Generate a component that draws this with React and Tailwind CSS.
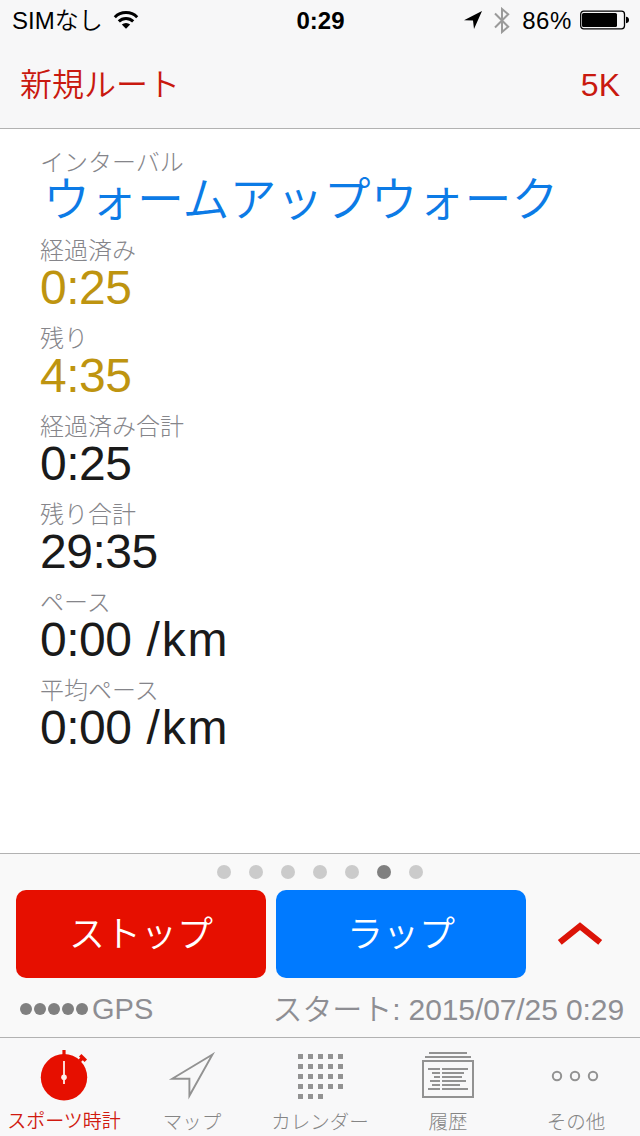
const stats = [
  { label: 'インターバル', value: 'ウォームアップウォーク', color: 'text-[#0c7be6]', text: true },
  { label: '経過済み', value: '0:25', color: 'text-[#be9410]' },
  { label: '残り', value: '4:35', color: 'text-[#be9410]' },
  { label: '経過済み合計', value: '0:25', color: 'text-[#1a1a1a]' },
  { label: '残り合計', value: '29:35', color: 'text-[#1a1a1a]' },
  { label: 'ペース', value: '0:00', unit: '/km', color: 'text-[#1a1a1a]' },
  { label: '平均ペース', value: '0:00', unit: '/km', color: 'text-[#1a1a1a]' },
];

const tabs = [
  { label: 'スポーツ時計', Icon: StopwatchIcon, active: true },
  { label: 'マップ', Icon: MapIcon },
  { label: 'カレンダー', Icon: CalendarIcon },
  { label: '履歴', Icon: HistoryIcon },
  { label: 'その他', Icon: MoreIcon },
];

function WifiIcon() {
  return (
    <svg width="26" height="20" viewBox="0 0 26 20" fill="none" stroke="#000" strokeWidth="3">
      <path d="M1.8 7.2a15.8 15.8 0 0 1 22.4 0" />
      <path d="M5.8 11.4a10.2 10.2 0 0 1 14.4 0" />
      <path d="M13 18.8 8.8 14.6a6 6 0 0 1 8.4 0z" fill="#000" stroke="none" />
    </svg>
  );
}

function StopwatchIcon() {
  return (
    <svg width="56" height="56" viewBox="0 0 56 56">
      <circle cx="28" cy="31.3" r="23.2" fill="#e60f00" />
      <path d="M26.4 4h3.2v5h-3.2z" fill="#e60f00" />
      <path d="m43.5 15 3.5-3.5" stroke="#e60f00" strokeWidth="3.5" />
      <path d="m44.2 9.2 5.6 5.6" stroke="#e60f00" strokeWidth="3.5" />
      <path d="M28 15v23" stroke="#ffeeea" strokeWidth="1.8" />
      <circle cx="28" cy="31.3" r="2.8" fill="#ffeeea" />
    </svg>
  );
}

function MapIcon() {
  return (
    <svg width="56" height="56" viewBox="0 0 56 56" fill="none" stroke="#929292" strokeWidth="1.9">
      <path d="M48.5 8.5 8.2 32.8h17.2v17z" />
    </svg>
  );
}

function CalendarIcon() {
  // the last row of the month only has three days
  const days = Array.from({ length: 23 }, (_, i) => i);
  return (
    <svg width="56" height="56" viewBox="0 0 56 56" fill="#929292">
      {days.map((d) => (
        <rect key={d} x={6 + (d % 5) * 10} y={8 + Math.floor(d / 5) * 10} width="5" height="5" />
      ))}
    </svg>
  );
}

function HistoryIcon() {
  return (
    <svg width="56" height="56" viewBox="0 0 56 56" fill="none" stroke="#929292" strokeWidth="2">
      <path d="M9 7h38M5 11h46M3 15h50v36H3z" />
      <path d="M8 23h12M12 27h8M14 31h6M10 35h10M12 39h8M8 43h12" />
      <path d="M22 23h26M22 27h22M22 31h20M22 35h24M22 39h18M22 43h26" />
    </svg>
  );
}

function MoreIcon() {
  return (
    <svg width="56" height="56" viewBox="0 0 56 56" fill="none" stroke="#929292" strokeWidth="2">
      <circle cx="9" cy="30" r="4.2" />
      <circle cx="27" cy="30" r="4.2" />
      <circle cx="45" cy="30" r="4.2" />
    </svg>
  );
}

function StatusBar() {
  return (
    <div className="grid h-10 grid-cols-3 items-center pr-[11px] pl-3 text-2xl leading-none text-black">
      <div className="flex items-center gap-2.5">
        <span className="pt-0.5 font-[350] whitespace-nowrap">SIMなし</span>
        <WifiIcon />
      </div>
      <div className="pt-0.5 text-center font-bold">0:29</div>
      <div className="flex items-center justify-end">
        <svg width="18" height="18" viewBox="0 0 18 18" className="mr-3">
          <path d="M18 0 0 9.2l9 .3 1 8.5z" />
        </svg>
        <svg width="16" height="27" viewBox="0 0 16 27" fill="none" stroke="#9a9a9a" strokeWidth="2" className="mr-3">
          <path d="m1 6.5 13.2 13.2L8 25V2l6.2 5.3L1 20.5" />
        </svg>
        <span className="mr-2 pt-0.5 tracking-[0.6px]">86%</span>
        <svg width="49" height="20" viewBox="0 0 49 20">
          <rect x=".7" y="1.2" width="43.8" height="17.6" rx="3" fill="none" stroke="#000" strokeWidth="1.3" />
          <rect x="2" y="3" width="35" height="14" rx="1.5" />
          <path d="M46 6.8q3 .4 3 3.2t-3 3.2z" />
        </svg>
      </div>
    </div>
  );
}

function Stat({ label, value, unit, color, text }) {
  const size = text ? 'pl-[3px] text-[47px] font-[350]' : 'text-5xl tracking-[-0.5px]';
  return (
    <div className="h-[88px]">
      <div className="h-8 pt-0.5 text-2xl leading-[30px] font-light text-[#85858a]">{label}</div>
      <div className={`h-11 leading-11 whitespace-nowrap ${size} ${color}`}>
        {value}
        {unit && <span className="tracking-[1.8px]"> {unit}</span>}
      </div>
    </div>
  );
}

export default function App() {
  return (
    <div className="flex h-[1136px] w-[640px] flex-col overflow-hidden bg-white font-['Liberation_Sans','Noto_Sans_CJK_JP',sans-serif]">
      <header className="h-[129px] border-b border-[#b2b2b2] bg-[#f7f7f8]">
        <StatusBar />
        <div className="flex h-[90px] items-center justify-between px-5 text-[32px] text-[#c9190f]">
          <span className="font-[350]">新規ルート</span>
          <span>5K</span>
        </div>
      </header>

      <main className="flex-1 px-10 pt-[17px]">
        {stats.map((s) => (
          <Stat key={s.label} {...s} />
        ))}
      </main>

      <section className="h-[184px] border-t border-[#b2b2b2] bg-[#f9f9f9]">
        <div className="flex h-9 items-center justify-center gap-[18px]">
          {[0, 1, 2, 3, 4, 5, 6].map((n) => (
            <span key={n} className={`size-3.5 rounded-full ${n === 5 ? 'bg-[#808080]' : 'bg-[#cbcbcb]'}`} />
          ))}
        </div>
        <div className="flex items-center gap-2.5 pl-4 text-4xl font-[350] text-white">
          <button className="h-[88px] w-[250px] rounded-[10px] bg-[#e60f00] pt-0.5">ストップ</button>
          <button className="h-[88px] w-[250px] rounded-[10px] bg-[#007aff] pt-0.5">ラップ</button>
          <svg width="46" height="26" viewBox="0 0 46 26" fill="none" stroke="#dc1408" strokeWidth="6.2" className="ml-[21px]">
            <path d="M2.8 21.4 23 5.2l20.2 16.2" />
          </svg>
        </div>
        <div className="flex h-[60px] items-center justify-between pr-4 pl-5 text-[29px] text-[#8e8e93]">
          <div className="flex items-center gap-0.5">
            {[0, 1, 2, 3, 4].map((n) => (
              <span key={n} className="mt-0.5 size-3 rounded-full bg-[#808080]" />
            ))}
            <span className="ml-0.5 pt-1">GPS</span>
          </div>
          <span className="pt-0.5 text-[30px] font-[350] tracking-[-0.1px]">スタート: 2015/07/25 0:29</span>
        </div>
      </section>

      <nav className="grid h-[99px] grid-cols-5 border-t border-[#b2b2b2] bg-[#f8f8f9]">
        {tabs.map(({ label, Icon, active }) => (
          <div key={label} className={`flex flex-col items-center pt-2 ${active ? 'text-[19px] font-[350] text-[#d01a10]' : 'text-[19.5px] font-light text-[#858585]'}`}>
            <Icon />
            <span className="mt-1.5 leading-7 whitespace-nowrap">{label}</span>
          </div>
        ))}
      </nav>
    </div>
  );
}
